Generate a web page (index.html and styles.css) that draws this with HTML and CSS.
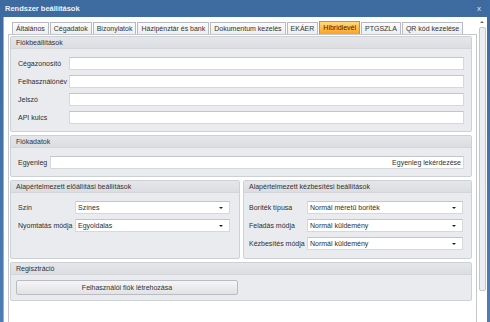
FILE: index.html
```html
<!DOCTYPE html>
<html lang="hu">
<head>
  <meta charset="UTF-8">
  <title>Rendszer beállítások</title>
  <link rel="stylesheet" href="styles.css">
</head>
<body>

  <div class="window">
    <div class="titlebar">
      <span class="title">Rendszer beállítások</span>
      <span class="close">x</span>
    </div>

    <div class="client">
      <div class="main">
        <!-- fülek -->
        <div class="tabs">
          <div class="tab">Általános</div>
          <div class="tab">Cégadatok</div>
          <div class="tab">Bizonylatok</div>
          <div class="tab">Házipénztár és bank</div>
          <div class="tab">Dokumentum kezelés</div>
          <div class="tab">EKÁER</div>
          <div class="tab active">Hibridlevél</div>
          <div class="tab">PTGSZLA</div>
          <div class="tab">QR kód kezelése</div>
        </div>

        <div class="panel">
          <div class="group">
            <div class="group-head">Fiókbeállítások</div>
            <div class="group-body form form-account">
              <span class="label">Cégazonosító</span><div class="field"></div>
              <span class="label">Felhasználónév</span><div class="field"></div>
              <span class="label">Jelszó</span><div class="field"></div>
              <span class="label">API kulcs</span><div class="field"></div>
            </div>
          </div>

          <div class="group">
            <div class="group-head">Fiókadatok</div>
            <div class="group-body form form-balance">
              <span class="label">Egyenleg</span>
              <div class="field"><span class="field-link">Egyenleg lekérdezése</span></div>
            </div>
          </div>

          <div class="columns">
            <div class="group">
              <div class="group-head">Alapértelmezett előállítási beállítások</div>
              <div class="group-body form form-print">
                <span class="label">Szín</span>
                <div class="field select">Színes</div>
                <span class="label">Nyomtatás módja</span>
                <div class="field select">Egyoldalas</div>
              </div>
            </div>
            <div class="group">
              <div class="group-head">Alapértelmezett kézbesítési beállítások</div>
              <div class="group-body form form-delivery">
                <span class="label">Boríték típusa</span>
                <div class="field select">Normál méretű boríték</div>
                <span class="label">Feladás módja</span>
                <div class="field select">Normál küldemény</div>
                <span class="label">Kézbesítés módja</span>
                <div class="field select">Normál küldemény</div>
              </div>
            </div>
          </div>

          <div class="group">
            <div class="group-head">Regisztráció</div>
            <div class="group-body reg">
              <button class="btn">Felhasználói fiók létrehozása</button>
            </div>
          </div>
        </div>
      </div>

      <div class="scrollbar">
        <div class="scroll-up"></div>
        <div class="thumb"></div>
      </div>
    </div>
  </div>

</body>
</html>
```

FILE: styles.css
```css
html, body {
  margin: 0;
  padding: 0;
  width: 490px;
  height: 322px;
  overflow: hidden;
}

body {
  font-family: "Liberation Sans", Arial, sans-serif;
  font-size: 7px;
  color: #2e2e2e;
}

.window {
  display: flex;
  flex-direction: column;
  height: 322px;
  background: linear-gradient(#3d6b9f, #4c7db3);
}

.titlebar {
  height: 17px;
  display: flex;
  justify-content: space-between;
  align-items: center;
  padding: 0 9px 0 5px;
}

.title {
  font-size: 7.5px;
  font-weight: bold;
  color: #eef2f7;
}

.close {
  font-size: 8px;
  color: #dfe7f0;
}

.client {
  flex: 1;
  display: flex;
  margin: 0 3px;
  background: #ffffff;
  border-left: 1px solid #8fb0d4;
  min-height: 0;
}

.main {
  flex: 1;
  padding: 5px 0 0 4px;
  display: flex;
  flex-direction: column;
  min-width: 0;
}

.tabs {
  display: flex;
  gap: 1px;
  margin-left: 4px;
  height: 12px;
}

.tab {
  height: 11px;
  line-height: 11px;
  padding: 0 3px;
  border: 1px solid #b7bac0;
  border-bottom: none;
  background: linear-gradient(#fbfbfc, #eceef1);
  color: #333;
  white-space: nowrap;
}

.tab.active {
  height: 12px;
  margin-top: -1px;
  border-color: #e58a10;
  background: linear-gradient(#ffd87c, #ffa21f);
  color: #3b2300;
}

.panel {
  flex: 1;
  border: 1px solid #c4c7cc;
  border-bottom: none;
  padding: 1px 4px 0 1px;
  display: flex;
  flex-direction: column;
  gap: 3px;
}

.group {
  border: 1px solid #cdd0d5;
  border-radius: 2px;
  background: #eaebee;
}

.group-head {
  height: 11px;
  line-height: 11px;
  padding-left: 5px;
  background: linear-gradient(#e5e6e9, #dcdde1);
  border-bottom: 1px solid #d3d5d9;
  color: #333;
}

.group-body {
  padding: 8px 7px 7px 7px;
}

.form {
  display: grid;
  row-gap: 5px;
  align-items: center;
}

.form-account { grid-template-columns: 51px 1fr; }
.form-balance { grid-template-columns: 32px 1fr; }
.form-print { grid-template-columns: 57px 1fr; padding-right: 9px; padding-bottom: 8px; }
.form-delivery { grid-template-columns: 58px 1fr; padding-left: 5px; padding-right: 8px; padding-bottom: 8px; }

.label {
  white-space: nowrap;
}

.field {
  height: 11px;
  line-height: 11px;
  background: #ffffff;
  border: 1px solid #d6d8dc;
  border-top-color: #c2c5ca;
  padding: 0 2px;
  position: relative;
}

.form-balance .field {
  text-align: right;
}

.field-link {
  color: #333;
}

.select::after {
  content: "";
  position: absolute;
  right: 6px;
  top: 5px;
  border-left: 2px solid transparent;
  border-right: 2px solid transparent;
  border-top: 2px solid #222;
}

.columns {
  display: grid;
  grid-template-columns: 230px 1fr;
  gap: 3px;
}

.reg {
  padding: 5px 0 5px 5px;
}

.btn {
  display: block;
  width: 222px;
  height: 15px;
  padding: 0;
  font-family: inherit;
  font-size: 7px;
  color: #333;
  border: 1px solid #b9bcc1;
  border-radius: 2px;
  background: linear-gradient(#f6f6f7, #e1e2e5);
}

.scrollbar {
  width: 10px;
  display: flex;
  flex-direction: column;
  align-items: center;
  padding-top: 4px;
}

.scroll-up {
  width: 0;
  height: 0;
  border-left: 2px solid transparent;
  border-right: 2px solid transparent;
  border-bottom: 2px solid #666;
  margin-bottom: 4px;
}

.thumb {
  width: 5px;
  height: 262px;
  border: 1px solid #c3c6cb;
  border-radius: 2px;
  background: #eceef1;
}
```
